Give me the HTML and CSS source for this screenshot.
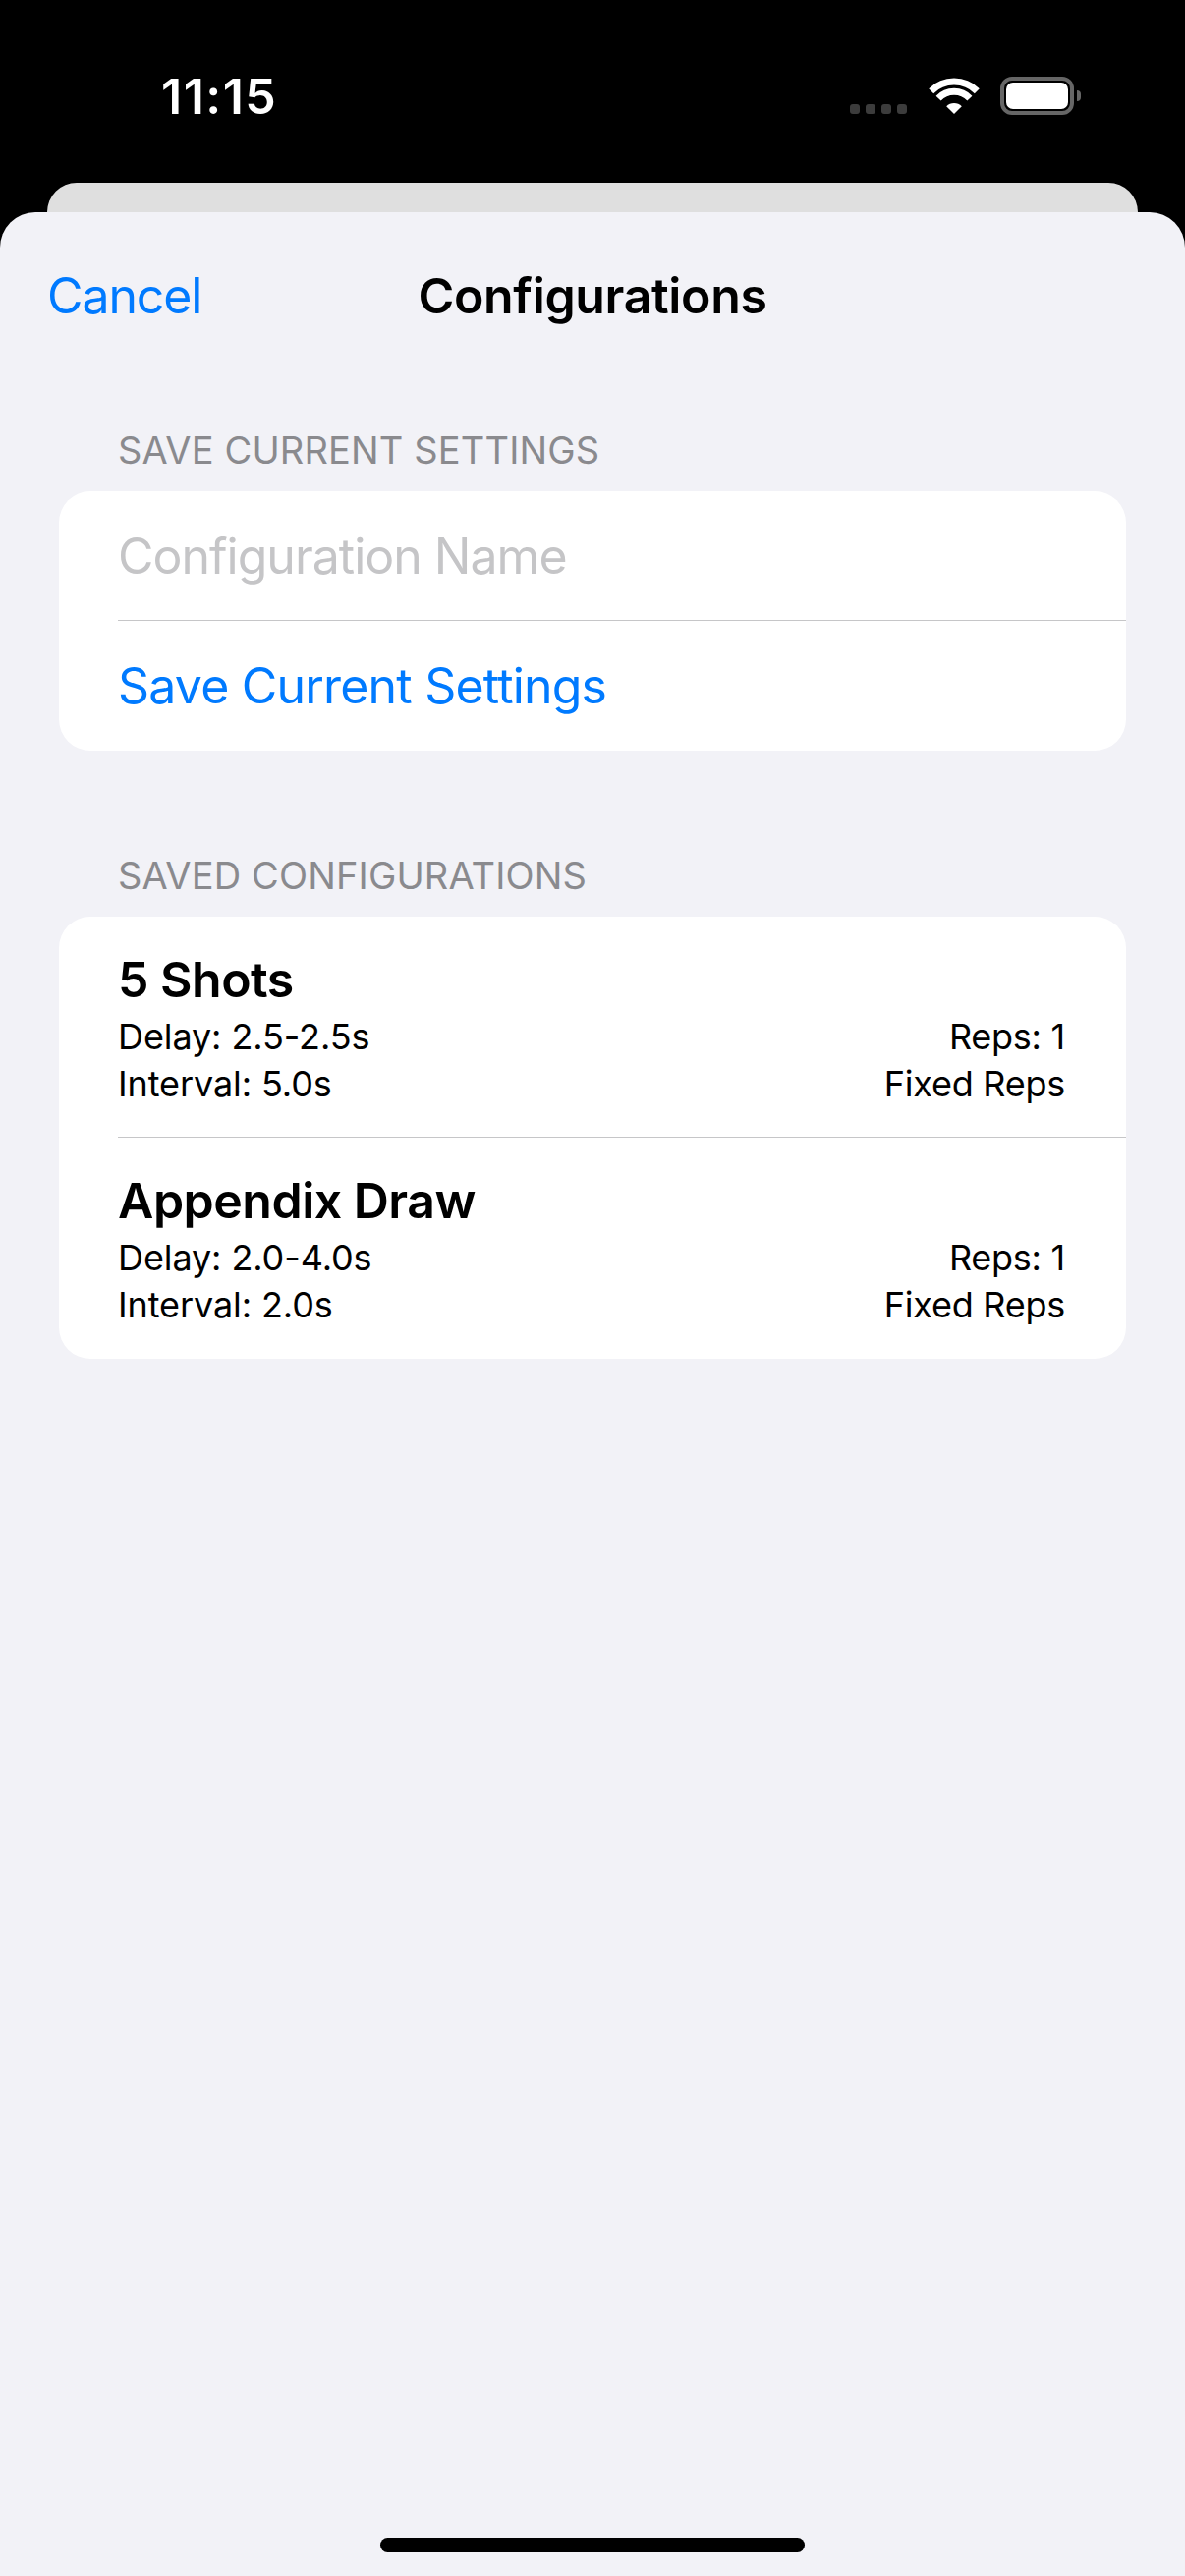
FILE: index.html
```html
<!DOCTYPE html>
<html lang="en">
<head>
<meta charset="utf-8">
<title>Configurations</title>
<link rel="stylesheet" href="styles.css">
</head>
<body>
<div class="screen">
  <header class="status">
    <span class="time">11:15</span>
    <div class="status-icons">
      <div class="signal"><i></i><i></i><i></i><i></i></div>
      <svg class="wifi" viewBox="0 0 52 37" width="52" height="37" aria-hidden="true">
        <path d="M2.7 13.7A33 33 0 0 1 49.3 13.7" fill="none" stroke="#fff" stroke-width="7"/>
        <path d="M10.1 21.1A22 22 0 0 1 41.9 21.1" fill="none" stroke="#fff" stroke-width="7"/>
        <path d="M26 37L18.2 29.2A11 11 0 0 1 33.8 29.2Z" fill="#fff"/>
      </svg>
      <div class="battery"><div class="battery-body"><div class="battery-fill"></div></div><div class="battery-nub"></div></div>
    </div>
  </header>
  <div class="back-card"></div>
  <main class="sheet">
    <nav class="navbar">
      <a class="cancel">Cancel</a>
      <h1 class="title">Configurations</h1>
    </nav>
    <section class="section first">
      <h2 class="section-head">SAVE CURRENT SETTINGS</h2>
      <div class="card">
        <div class="row placeholder">Configuration Name</div>
        <div class="sep"></div>
        <div class="row action">Save Current Settings</div>
      </div>
    </section>
    <section class="section second">
      <h2 class="section-head">SAVED CONFIGURATIONS</h2>
      <div class="card">
        <article class="config">
          <h3 class="config-name">5 Shots</h3>
          <div class="config-grid">
            <span>Delay: 2.5-2.5s</span><span class="r">Reps: 1</span>
            <span>Interval: 5.0s</span><span class="r">Fixed Reps</span>
          </div>
        </article>
        <div class="sep"></div>
        <article class="config">
          <h3 class="config-name">Appendix Draw</h3>
          <div class="config-grid">
            <span>Delay: 2.0-4.0s</span><span class="r">Reps: 1</span>
            <span>Interval: 2.0s</span><span class="r">Fixed Reps</span>
          </div>
        </article>
      </div>
    </section>
    <div class="home-bar"></div>
  </main>
</div>
</body>
</html>
```
FILE: styles.css
```css
* { box-sizing: border-box; }
html, body { margin: 0; padding: 0; background: #000; }
body { font-family: Inter, "Liberation Sans", sans-serif; }
h1, h2, h3 { margin: 0; font: inherit; }

.screen { width: 1206px; height: 2622px; display: flex; flex-direction: column; overflow: hidden; background: #000; }

.status { height: 186px; flex: none; display: flex; justify-content: space-between; color: #fff; padding: 68px 106px 0 164px; }
.time { font-size: 50px; font-weight: 600; line-height: 60px; letter-spacing: 1.5px; }
.status-icons { display: flex; align-items: flex-start; padding-top: 10px; }
.signal { display: flex; gap: 6px; margin-top: 28px; margin-right: 22px; }
.signal i { display: block; width: 10px; height: 10px; border-radius: 3px; background: #3c3c3c; }
.wifi { display: block; margin-top: 1px; margin-right: 21px; }
.battery { display: flex; align-items: center; }
.battery-body { width: 75px; height: 39px; border: 4px solid #666; border-radius: 12px; padding: 2px; }
.battery-fill { width: 100%; height: 100%; background: #fff; border-radius: 7px; }
.battery-nub { width: 4px; height: 11px; margin-left: 3px; background: #666; border-radius: 0 4px 4px 0; }

.back-card { height: 30px; flex: none; margin: 0 48px; background: #dfdfdf; border-radius: 34px 34px 0 0; }

.sheet { flex: 1; background: #f2f2f7; border-radius: 36px 36px 0 0; padding: 0 60px; display: flex; flex-direction: column; }

.navbar { height: 168px; flex: none; margin: 0 -60px; position: relative; display: flex; align-items: flex-start; justify-content: center; padding-top: 55px; }
.cancel { position: absolute; left: 48px; top: 55px; color: #007aff; font-size: 50px; line-height: 60px; letter-spacing: -1.1px; }
.title { font-size: 50px; font-weight: 600; line-height: 60px; color: #000; letter-spacing: -0.35px; }

.section-head { color: #8a8a8e; font-size: 38px; line-height: 44px; padding-left: 60px; height: 64px; letter-spacing: 0.15px; font-weight: 400; }
.section.first { margin-top: 52px; }
.section.second { margin-top: 105px; }

.card { background: #fff; border-radius: 32px; }
.row { height: 131px; display: flex; align-items: center; padding-left: 60px; font-size: 50px; letter-spacing: -0.8px; }
.row.action { height: 132px; color: #007aff; }
.row.placeholder { color: #c5c5c7; letter-spacing: -1px; }
.sep { height: 1px; margin-left: 60px; background: #c6c6c8; }

.config { height: 224px; padding: 34px 62px 0 60px; }
.config:last-child { height: 225px; }
.config-name { font-size: 50px; font-weight: 600; line-height: 60px; color: #000; letter-spacing: -0.5px; }
.config-grid { display: grid; grid-template-columns: 1fr auto; font-size: 36px; line-height: 48px; color: #000; margin-top: 4px; letter-spacing: -0.1px; }
.r { text-align: right; letter-spacing: -0.25px; }

.home-bar { width: 432px; height: 15px; border-radius: 8px; background: #000; margin: auto 0 24px 327px; }
```
